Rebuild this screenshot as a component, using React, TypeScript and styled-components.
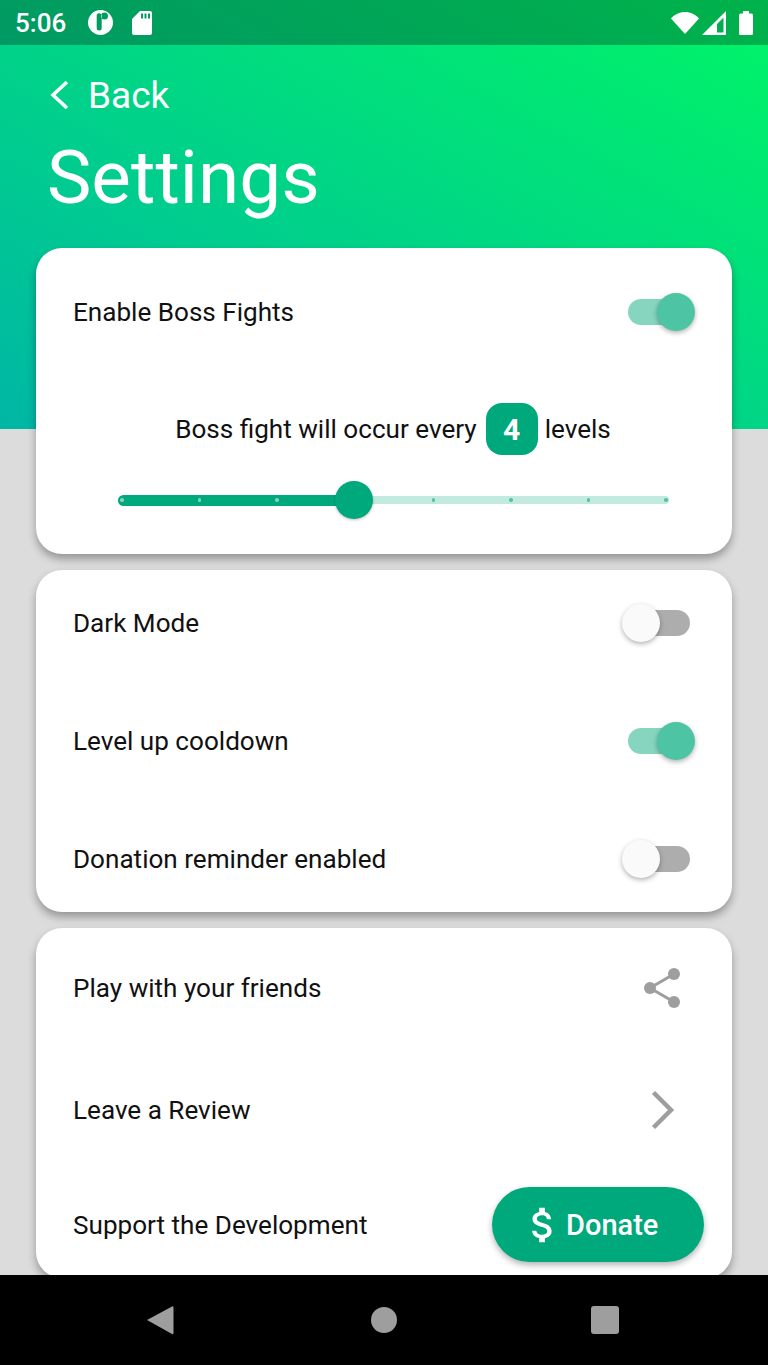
import React from 'react';
import styled, { createGlobalStyle } from 'styled-components';
import { MdAttachMoney } from 'react-icons/md';

const GlobalStyle = createGlobalStyle`
  html, body {
    margin: 0;
    padding: 0;
    font-family: Roboto, "Liberation Sans", sans-serif;
    background: #000;
  }
`;

const Screen = styled.div`
  width: 768px;
  height: 1365px;
  display: flex;
  flex-direction: column;
  overflow: hidden;
`;

const Body = styled.div`
  flex: 1;
  min-height: 0;
  overflow: hidden;
  background: #dcdcdc;
`;

const Hero = styled.div`
  height: 429px;
  background: linear-gradient(to top right, #00b6a5, #00f566);
  color: #fff;
`;

const StatusBar = styled.div`
  height: 45px;
  background: rgba(0, 0, 0, 0.27);
  display: flex;
  align-items: center;
  padding: 0 15px;
`;

const Time = styled.span`
  font-size: 26px;
  font-weight: 500;
  width: 73px;
`;

const StatusLeft = styled.div`
  display: flex;
  align-items: center;
  gap: 19px;
  flex: 1;
`;

const StatusRight = styled.div`
  display: flex;
  align-items: center;
  gap: 3px;
`;

const BackRow = styled.div`
  display: flex;
  align-items: center;
  gap: 19px;
  padding: 27px 0 0 49px;
  height: 46px;
  font-size: 37px;
`;

const Title = styled.h1`
  margin: 16px 0 0 47px;
  font-size: 74.7px;
  font-weight: 400;
  line-height: 88px;
`;

const Cards = styled.div`
  margin-top: -181px;
  padding: 0 36px;
  display: flex;
  flex-direction: column;
  gap: 16px;
`;

const Card = styled.section`
  background: #fff;
  border-radius: 26px;
  box-shadow: 0 5px 9px rgba(0, 0, 0, 0.32);
  display: flex;
  flex-direction: column;
  position: relative;
`;

const Row = styled.div<{ $height: number; $mb?: number }>`
  height: ${(p) => p.$height}px;
  margin-bottom: ${(p) => p.$mb ?? 0}px;
  padding: 0 37px;
  display: flex;
  align-items: center;
  justify-content: space-between;
  color: #111;
  font-size: 26.1px;
`;

const Track = styled.span<{ $on: boolean }>`
  position: absolute;
  left: 6px;
  right: 5px;
  top: 6px;
  height: 26px;
  border-radius: 13px;
  background: ${(p) => (p.$on ? '#85d5bf' : '#adadad')};
`;

const Knob = styled.span<{ $on: boolean }>`
  position: absolute;
  top: 0;
  left: ${(p) => (p.$on ? 35 : 0)}px;
  width: 38px;
  height: 38px;
  border-radius: 50%;
  background: ${(p) => (p.$on ? '#4dc5a5' : '#fafafa')};
  box-shadow: 0 2px 5px rgba(0, 0, 0, 0.3);
`;

const SwitchBox = styled.span`
  position: relative;
  display: block;
  width: 73px;
  height: 38px;
`;

const Sentence = styled.div`
  height: 52px;
  margin-top: 28px;
  padding-left: 18px;
  display: flex;
  align-items: center;
  justify-content: center;
  gap: 8px;
  color: #111;
  font-size: 26.1px;
`;

const Badge = styled.span`
  width: 52px;
  height: 52px;
  margin: 0 -1px 0 1px;
  border-radius: 16px;
  background: #00a97b;
  color: #fff;
  font-size: 30px;
  font-weight: 700;
  display: flex;
  align-items: center;
  justify-content: center;
`;

const Slider = styled.div`
  position: relative;
  margin: 26px 63px 35px 82px;
  height: 38px;
  display: flex;
  align-items: center;
`;

const SliderActive = styled.div`
  width: 220px;
  height: 11px;
  border-radius: 6px 0 0 6px;
  background: #00a97b;
  display: flex;
  justify-content: space-between;
  align-items: center;
  padding-left: 2px;
  box-sizing: border-box;
`;

const SliderRest = styled.div`
  flex: 1;
  height: 8px;
  border-radius: 0 4px 4px 0;
  background: #c2eadf;
  display: flex;
  justify-content: flex-end;
  gap: 74px;
  align-items: center;
  padding-right: 1px;
`;

const Tick = styled.span<{ $active?: boolean }>`
  flex: none;
  width: 3.6px;
  height: 3.6px;
  border-radius: 50%;
  background: ${(p) => (p.$active ? '#7fd5bd' : '#4fc5a4')};
`;

const ActiveTicks = styled.div`
  display: flex;
  gap: 74px;
  align-items: center;
`;

const Thumb = styled.span`
  position: absolute;
  left: 217px;
  top: 0;
  width: 38px;
  height: 38px;
  border-radius: 50%;
  background: #00a97b;
  box-shadow: 0 1px 3px rgba(0, 0, 0, 0.25);
`;

const DonateButton = styled.button`
  width: 212px;
  height: 75px;
  margin: 0 -9px 1px 0;
  border: 0;
  border-radius: 38px;
  background: #00a97b;
  color: #fff;
  font-family: inherit;
  font-size: 29px;
  font-weight: 500;
  display: flex;
  align-items: center;
  box-shadow: 0 3px 6px rgba(0, 0, 0, 0.3);
  padding: 0 0 0 28px;
`;

const IconSlot = styled.span`
  display: block;
  width: 73px;
  height: 44px;
`;

const NavBar = styled.nav`
  flex: none;
  height: 90px;
  background: #000;
  display: flex;
  align-items: center;
  padding: 0 149px 0 147px;
  justify-content: space-between;
`;

const Toggle = ({ on }: { on: boolean }) => (
  <SwitchBox>
    <Track $on={on} />
    <Knob $on={on} />
  </SwitchBox>
);

const App: React.FC = () => (
  <Screen>
    <GlobalStyle />
    <Body>
      <Hero>
        <StatusBar>
          <Time>5:06</Time>
          <StatusLeft>
            <svg width="25" height="25" viewBox="0 0 25 25">
              <path
                fill="#fff"
                fillRule="evenodd"
                d="M12.5 0a12.5 12.5 0 1 1 0 25a12.5 12.5 0 0 1 0-25zM10.5 3.200C9.200 3.500 8.700 4.500 8.700 5.800V18a2.500 2.500 0 0 0 5 0V5.500c0-1.500-1.500-2.600-3.200-2.300zM16.500 2.400a3.500 3.500 0 1 0 0 7a3.500 3.500 0 0 0 0-7z"
              />
            </svg>
            <svg width="20" height="24" viewBox="0 0 20 24">
              <path
                fill="#fff"
                fillRule="evenodd"
                d="M8 0h10a2 2 0 0 1 2 2v20a2 2 0 0 1-2 2H2a2 2 0 0 1-2-2V8zM9 2.500v5h2v-5zM12.500 2.500v5h2v-5zM16 2.500v5h2v-5z"
              />
            </svg>
          </StatusLeft>
          <StatusRight>
            <svg width="28" height="22" viewBox="0 0 28 22">
              <path fill="#fff" d="M14 22L0 6.500C3.500 2.500 8.500 0 14 0s10.500 2.500 14 6.500z" />
            </svg>
            <svg width="24" height="24" viewBox="0 0 24 24">
              <path fill="#fff" fillRule="evenodd" d="M24 0v24H0zM21.500 6.500L15 13v8.500h6.500z" />
            </svg>
            <svg width="14" height="24" viewBox="0 0 14 24" style={{ marginLeft: 10 }}>
              <path fill="#fff" d="M4 0h6v2.500h2.500a1.500 1.500 0 0 1 1.500 1.500v18.500a1.500 1.500 0 0 1-1.500 1.500h-11a1.500 1.500 0 0 1-1.500-1.500V4a1.500 1.500 0 0 1 1.500-1.500H4z" />
            </svg>
          </StatusRight>
        </StatusBar>
        <BackRow>
          <svg width="20" height="30" viewBox="0 0 20 30">
            <path d="M18 2L4 15l14 13" fill="none" stroke="#fff" strokeWidth="3.600" />
          </svg>
          Back
        </BackRow>
        <Title>Settings</Title>
      </Hero>
      <Cards>
        <Card>
          <Row $height={127}>
            Enable Boss Fights
            <Toggle on />
          </Row>
          <Sentence>
            Boss fight will occur every <Badge>4</Badge> levels
          </Sentence>
          <Slider>
            <SliderActive>
              <ActiveTicks>
                <Tick $active />
                <Tick $active />
                <Tick $active />
              </ActiveTicks>
            </SliderActive>
            <SliderRest>
              <Tick />
              <Tick />
              <Tick />
              <Tick />
            </SliderRest>
            <Thumb />
          </Slider>
        </Card>
        <Card>
          <Row $height={106} $mb={12}>
            Dark Mode
            <Toggle on={false} />
          </Row>
          <Row $height={106} $mb={12}>
            Level up cooldown
            <Toggle on />
          </Row>
          <Row $height={106}>
            Donation reminder enabled
            <Toggle on={false} />
          </Row>
        </Card>
        <Card>
          <Row $height={120}>
            Play with your friends
            <IconSlot>
              <svg width="73" height="44" viewBox="0 0 73 44">
                <path d="M52 8L28 22l24 14" fill="none" stroke="#9e9e9e" strokeWidth="3" />
                <circle cx="52" cy="8" r="6" fill="#9e9e9e" />
                <circle cx="28" cy="22" r="6" fill="#9e9e9e" />
                <circle cx="52" cy="36" r="6" fill="#9e9e9e" />
              </svg>
            </IconSlot>
          </Row>
          <Row $height={124}>
            Leave a Review
            <IconSlot>
              <svg width="73" height="44" viewBox="0 0 73 44">
                <path d="M31.500 4.500L49 22 31.500 39.500" fill="none" stroke="#9e9e9e" strokeWidth="4.500" />
              </svg>
            </IconSlot>
          </Row>
          <Row $height={106}>
            Support the Development
            <DonateButton>
              <MdAttachMoney size={46} />
              Donate
            </DonateButton>
          </Row>
        </Card>
      </Cards>
    </Body>
    <NavBar>
      <svg width="30" height="30" viewBox="0 0 30 30">
        <path d="M0 15L25 1.500a1 1 0 0 1 1.500 1V28a1 1 0 0 1-1.500 1z" fill="#9e9e9e" />
      </svg>
      <svg width="26" height="26" viewBox="0 0 26 26">
        <circle cx="13" cy="13" r="13" fill="#9e9e9e" />
      </svg>
      <svg width="28" height="28" viewBox="0 0 28 28">
        <rect width="28" height="28" rx="3" fill="#9e9e9e" />
      </svg>
    </NavBar>
  </Screen>
);

export default App;
